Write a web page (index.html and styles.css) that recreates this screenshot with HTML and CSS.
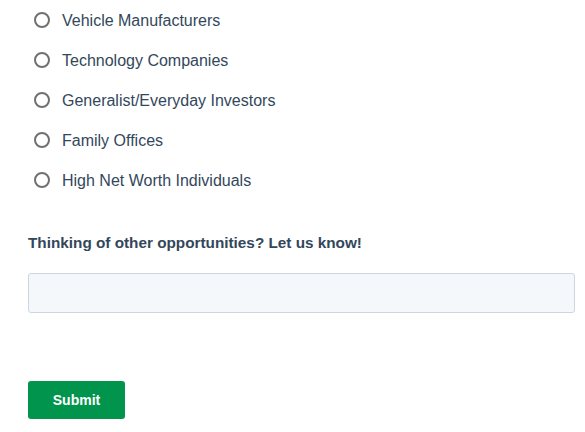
FILE: index.html
```html
<!DOCTYPE html>
<html>
<head>
<meta charset="utf-8">
<link rel="stylesheet" href="styles.css">
</head>
<body>
<form class="form">
  <ul class="options">
    <li class="option"><span class="radio"></span><span class="option-label">Vehicle Manufacturers</span></li>
    <li class="option"><span class="radio"></span><span class="option-label">Technology Companies</span></li>
    <li class="option"><span class="radio"></span><span class="option-label">Generalist/Everyday Investors</span></li>
    <li class="option"><span class="radio"></span><span class="option-label">Family Offices</span></li>
    <li class="option"><span class="radio"></span><span class="option-label">High Net Worth Individuals</span></li>
  </ul>
  <label class="field-label">Thinking of other opportunities? Let us know!</label>
  <div class="input"></div>
  <button type="button" class="submit">Submit</button>
</form>
</body>
</html>
```
FILE: styles.css
```css
html, body {
  margin: 0;
  padding: 0;
  background: #ffffff;
}
body {
  font-family: "Liberation Sans", Arial, Helvetica, sans-serif;
  color: #33475b;
}
.form {
  padding: 0 10px 0 28px;
}
.options {
  list-style: none;
  margin: 0;
  padding: 0;
}
.option {
  height: 40px;
  display: flex;
  align-items: center;
}
.radio {
  width: 16px;
  height: 16px;
  box-sizing: border-box;
  border: 2px solid #707070;
  border-radius: 50%;
  margin-left: 6px;
  margin-right: 12px;
  flex: none;
}
.option-label {
  font-size: 16px;
  line-height: 20px;
  padding-top: 1px;
}
.field-label {
  display: block;
  margin-top: 33px;
  font-size: 15.3px;
  font-weight: bold;
  line-height: 20px;
}
.input {
  margin-top: 20px;
  height: 40px;
  box-sizing: border-box;
  background: #f5f8fa;
  border: 1px solid #cbd6e2;
  border-radius: 3px;
}
.submit {
  display: block;
  margin-top: 68px;
  width: 97px;
  height: 38px;
  border: none;
  border-radius: 3px;
  background: #00944c;
  color: #ffffff;
  font-family: "Liberation Sans", Arial, sans-serif;
  font-weight: bold;
  font-size: 14px;
  padding: 0;
}
```
